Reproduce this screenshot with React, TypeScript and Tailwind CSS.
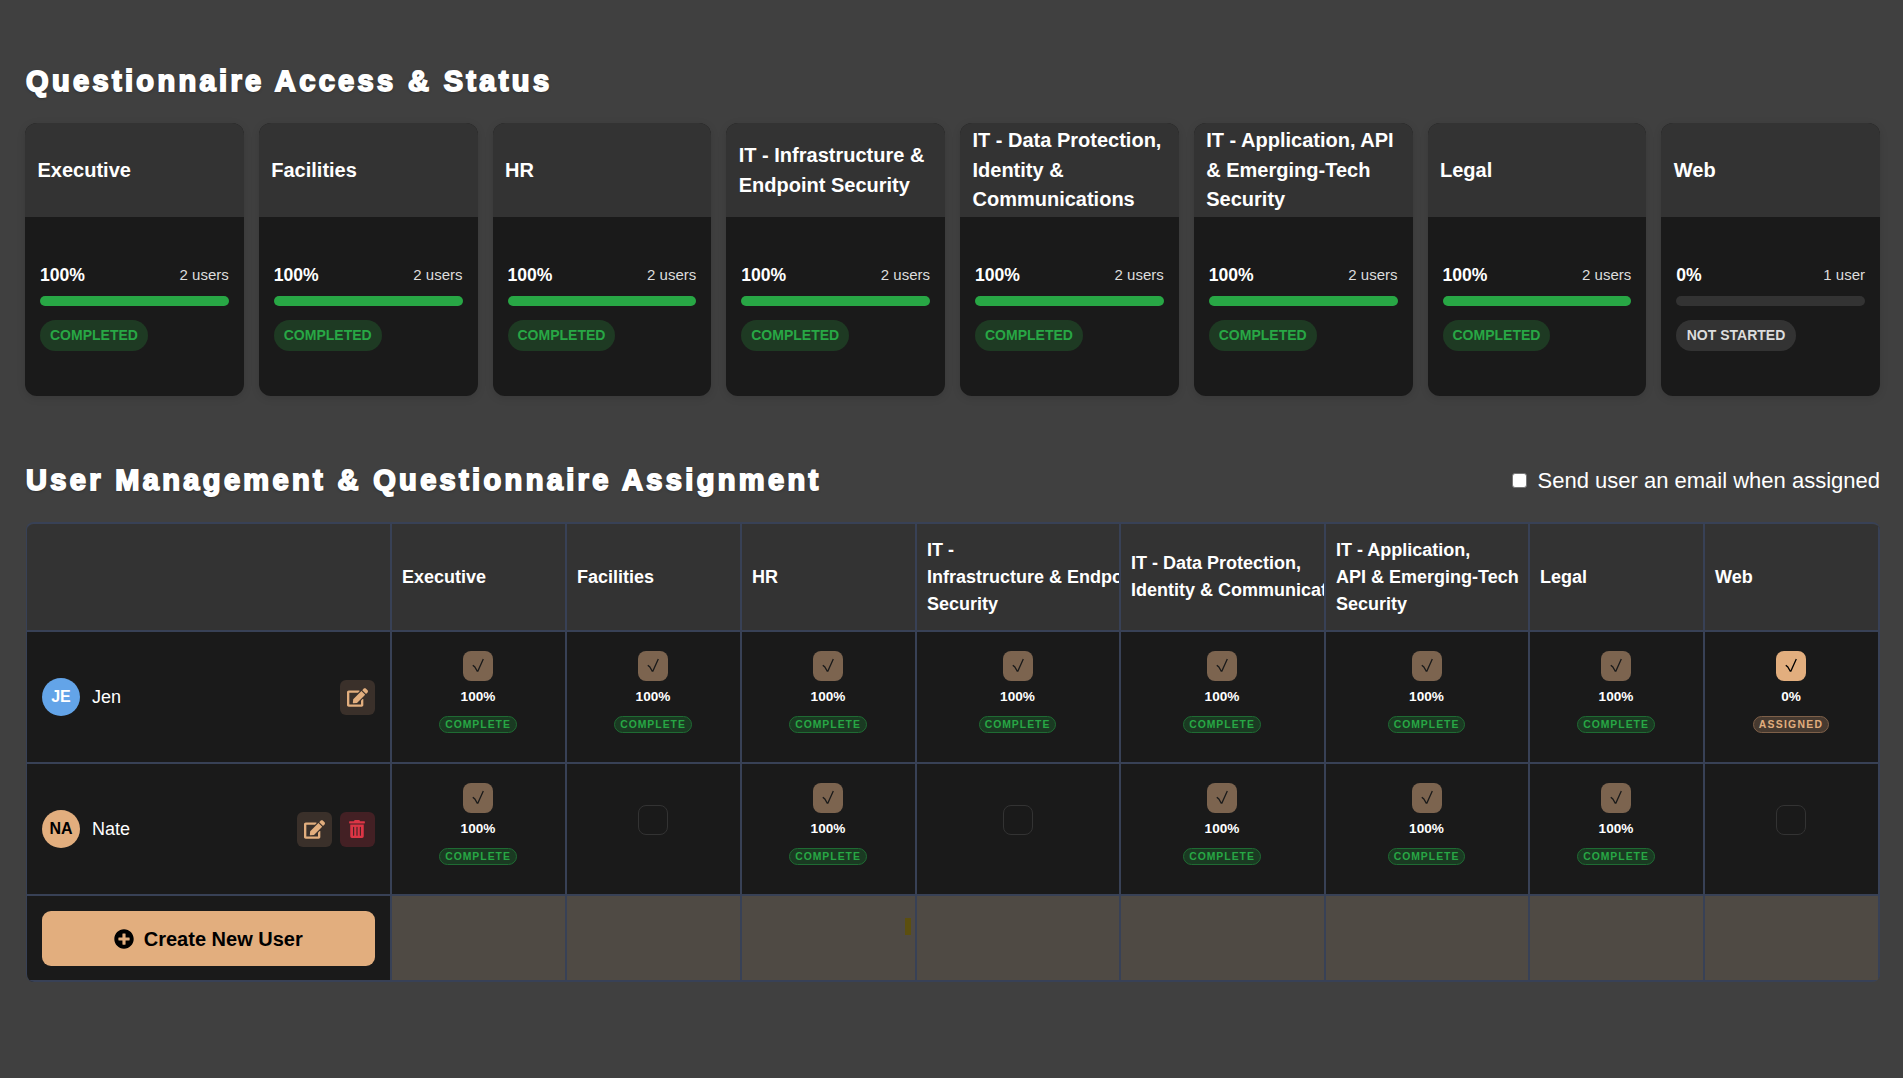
import React from "react";
import { FaEdit, FaTrashAlt, FaPlusCircle } from "react-icons/fa";

const cards = [
  { name: "Executive", pct: "100%", users: "2 users", done: true },
  { name: "Facilities", pct: "100%", users: "2 users", done: true },
  { name: "HR", pct: "100%", users: "2 users", done: true },
  { name: "IT - Infrastructure & Endpoint Security", pct: "100%", users: "2 users", done: true },
  { name: "IT - Data Protection, Identity & Communications", pct: "100%", users: "2 users", done: true },
  { name: "IT - Application, API & Emerging-Tech Security", pct: "100%", users: "2 users", done: true },
  { name: "Legal", pct: "100%", users: "2 users", done: true },
  { name: "Web", pct: "0%", users: "1 user", done: false },
];

const heads: string[][] = [
  ["Executive"],
  ["Facilities"],
  ["HR"],
  ["IT -", "Infrastructure & Endpoint", "Security"],
  ["IT - Data Protection,", "Identity & Communications"],
  ["IT - Application,", "API & Emerging-Tech", "Security"],
  ["Legal"],
  ["Web"],
];

const users = [
  { name: "Jen", initials: "JE", avatar: "bg-[#63a4e8] text-white", del: false, cells: ["c", "c", "c", "c", "c", "c", "c", "a"] },
  { name: "Nate", initials: "NA", avatar: "bg-[#e2ae7e] text-black", del: true, cells: ["c", "n", "c", "n", "c", "c", "c", "n"] },
];

function Title({ children }: { children: React.ReactNode }) {
  return (
    <h2 className="ml-[1px] h-[42px] text-[29px] leading-[42px] font-bold text-white tracking-[3.35px] whitespace-nowrap [-webkit-text-stroke:1.8px_#fff] [text-shadow:0_1px_3px_rgba(0,0,0,0.5)]">
      {children}
    </h2>
  );
}

function Card({ c }: { c: (typeof cards)[number] }) {
  return (
    <div className="flex-1 h-[273px] rounded-xl overflow-hidden bg-[#1a1a1a] shadow-[0_2px_8px_rgba(0,0,0,0.12)]">
      <div className="h-[94px] bg-[#333333] flex items-center pt-[1px] px-[12.5px] text-[20px] leading-[29.5px] font-bold text-white">
        <span>{c.name}</span>
      </div>
      <div className="px-[15px] pt-[47px]">
        <div className="h-[22px] flex items-center justify-between">
          <span className="text-[17.6px] font-bold text-white">{c.pct}</span>
          <span className="text-[15px] text-[#dddddd]">{c.users}</span>
        </div>
        <div className="mt-[10px] h-[10px] rounded-[5px] bg-[#333333] overflow-hidden">
          {c.done && <div className="h-full w-full bg-[#28a745]" />}
        </div>
        {c.done ? (
          <span className="mt-[14px] inline-flex items-center h-[31px] px-[10px] rounded-full bg-[#1e3a23] text-[#28a745] text-[14px] font-bold">
            COMPLETED
          </span>
        ) : (
          <span className="mt-[14px] inline-flex items-center h-[31px] px-[10.5px] rounded-full bg-[#333333] text-[#dddddd] text-[14px] font-bold">
            NOT STARTED
          </span>
        )}
      </div>
    </div>
  );
}

const line = "border-r-2 border-b-2 border-[#384156]";

function Check({ color }: { color: string }) {
  return (
    <svg width="30" height="30" viewBox="0 0 30 30" fill="none" className={color}>
      <path d="M9.8 14.2 L11.8 16 L14.2 20 L14.9 20 L20.3 8" stroke="currentColor" strokeWidth="1.3" />
    </svg>
  );
}

function Cell({ s }: { s: string }) {
  if (s === "n") {
    return (
      <div className={`${line} bg-[#1a1a1a] flex flex-col items-center pt-[41px]`}>
        <div className="w-[30px] h-[30px] rounded-[8px] border border-[#333333]" />
      </div>
    );
  }
  const complete = s === "c";
  return (
    <div className={`${line} bg-[#1a1a1a] flex flex-col items-center pt-[19px]`}>
      <div className={`w-[30px] h-[30px] rounded-[8px] ${complete ? "bg-[#7c644f]" : "bg-[#e2ae7e]"}`}>
        <Check color={complete ? "text-[#1a1a1a]" : "text-black"} />
      </div>
      <div className="mt-[6px] h-[20px] leading-[20px] text-[13.6px] font-bold text-white">{complete ? "100%" : "0%"}</div>
      {complete ? (
        <span className="mt-[9px] h-[17px] inline-flex items-center px-[5px] rounded-[9px] border border-[#1f6b33] bg-[#1a3a22] text-[#28a745] text-[10.4px] font-bold tracking-[1px]">
          COMPLETE
        </span>
      ) : (
        <span className="mt-[9px] h-[17px] inline-flex items-center px-[5px] rounded-[9px] border border-[#7e6049] bg-[#473a30] text-[#e2ae7e] text-[10.4px] font-bold tracking-[1.3px]">
          ASSIGNED
        </span>
      )}
    </div>
  );
}

export default function App() {
  return (
    <div className="min-h-[1078px] bg-[#404040] pt-[60px] pl-[25px] pr-[23px] font-['Liberation_Sans',Arial,sans-serif]">
      <Title>Questionnaire Access &amp; Status</Title>
      <div className="mt-[21px] flex gap-[15px]">
        {cards.map((c) => (
          <Card key={c.name} c={c} />
        ))}
      </div>

      <div className="mt-[63px] flex items-center justify-between h-[42px]">
        <Title>User Management &amp; Questionnaire Assignment</Title>
        <label className="flex items-center gap-[11px] text-[22px] text-white">
          <input type="checkbox" className="appearance-none w-[15px] h-[15px] m-0 bg-white border border-[#767676] rounded-[3px]" />
          Send user an email when assigned
        </label>
      </div>

      <div className="mt-[21px] ml-[1px] w-[1854px] border-t-2 border-l border-[#384156] rounded-[8px] overflow-hidden grid grid-cols-[364.5px_175px_175px_175px_204px_205px_204px_175px_175px] grid-rows-[108px_132px_132px_86px]">
        <div className={`${line} bg-[#333333]`} />
        {heads.map((h) => (
          <div key={h.join()} className={`${line} bg-[#333333] flex items-center overflow-hidden pl-[10.5px]`}>
            <div className="text-[18px] leading-[27px] font-bold text-white whitespace-nowrap">
              {h.map((l) => (
                <div key={l}>{l}</div>
              ))}
            </div>
          </div>
        ))}

        {users.map((u) => (
          <React.Fragment key={u.name}>
            <div className={`${line} bg-[#1a1a1a] flex items-center pl-[15px] pr-[15px]`}>
              <div className={`w-[38px] h-[38px] rounded-full flex items-center justify-center text-[16px] font-bold ${u.avatar}`}>
                {u.initials}
              </div>
              <span className="ml-[12px] text-[18px] text-white">{u.name}</span>
              <div className="ml-auto flex gap-[8px]">
                <button className="w-[35px] h-[35px] rounded-[6px] bg-[#3a302a] text-[#e2ae7e] flex items-center justify-center">
                  <FaEdit size={21} />
                </button>
                {u.del && (
                  <button className="w-[35px] h-[35px] rounded-[6px] bg-[#432024] text-[#dc3545] flex items-center justify-center">
                    <FaTrashAlt size={18} />
                  </button>
                )}
              </div>
            </div>
            {u.cells.map((s, i) => (
              <Cell key={i} s={s} />
            ))}
          </React.Fragment>
        ))}

        <div className={`${line} bg-[#1a1a1a] flex items-start pl-[15px] pr-[15px] pt-[15px]`}>
          <button className="w-full h-[55px] rounded-[9px] bg-[#e2ae7e] text-black text-[20px] font-bold flex items-center justify-center gap-[10px]">
            <FaPlusCircle size={20} />
            Create New User
          </button>
        </div>
        {heads.map((h, i) => (
          <div key={h.join()} className={`${line} bg-[#4f4a44] relative`}>
            {i === 2 && <div className="absolute right-[3.5px] top-[22px] w-[6px] h-[17px] bg-[#5c4f0f]" />}
          </div>
        ))}
      </div>
    </div>
  );
}
